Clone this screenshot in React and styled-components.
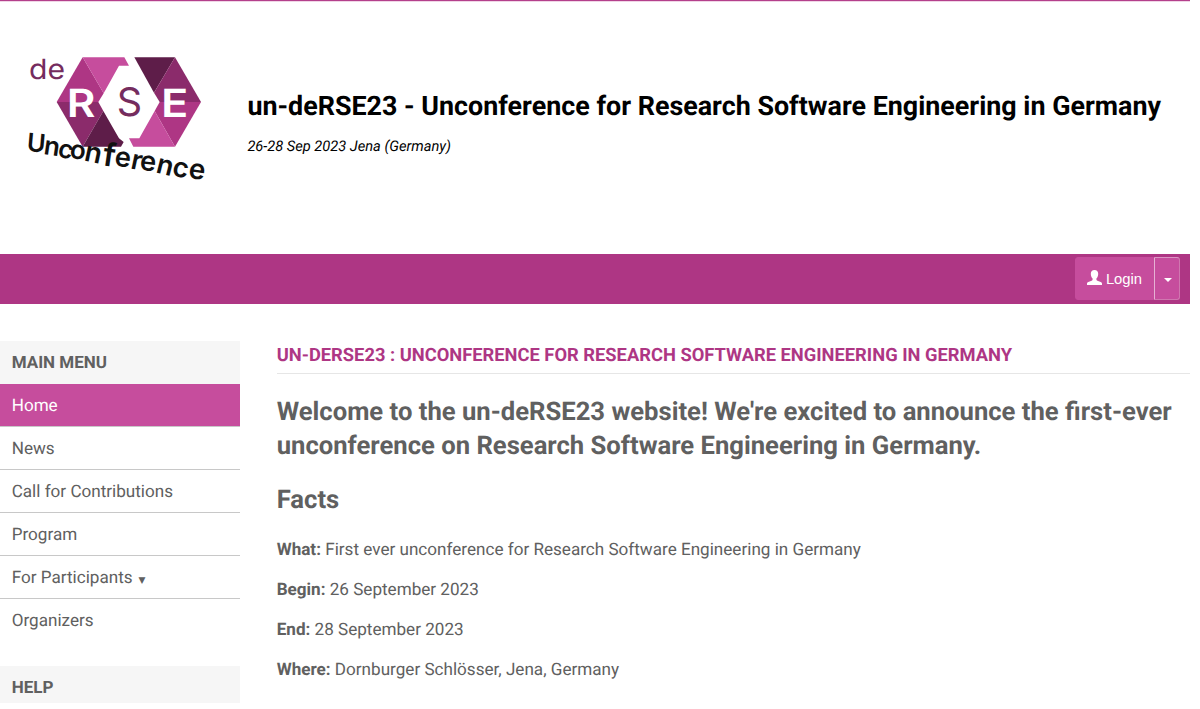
import React from "react";
import styled, { createGlobalStyle } from "styled-components";

const GlobalStyle = createGlobalStyle`
  body {
    margin: 0;
    background: #fff;
    overflow: hidden;
    text-rendering: geometricPrecision;
  }
`

const Page = styled.div`
  width: 1190px;
  height: 703px;
  overflow: hidden;
  box-sizing: border-box;
  border-top: 1px solid #b4408c;
  font-family: Roboto, "Liberation Sans", sans-serif;
  color: #606060;
`

const Header = styled.header`
  display: flex;
  align-items: flex-start;
  box-sizing: border-box;
  height: 253px;
  border-top: 1px solid #f0d5e6;
`

const Logo = styled.svg`
  flex: none;
  width: 210px;
  height: 150px;
  margin: 38px 22.4px 0 15px;
`

const Titles = styled.div`
  padding-top: 85px;
  color: #000;
`

const SiteTitle = styled.h1`
  margin: 0;
  font-size: 26.86px;
  line-height: 38px;
  font-weight: 700;
  white-space: nowrap;
`

const Dates = styled.div`
  margin-top: 11px;
  font-size: 14.65px;
  line-height: 20px;
  font-style: italic;
`

const NavBar = styled.nav`
  display: flex;
  justify-content: flex-end;
  align-items: flex-start;
  box-sizing: border-box;
  height: 50px;
  padding: 3px 10px 0 0;
  background: #ae3684;
`

const LoginButton = styled.button`
  display: flex;
  align-items: center;
  justify-content: center;
  box-sizing: border-box;
  width: ${({ $narrow }) => ($narrow ? "26px" : "79px")};
  height: 43px;
  padding: ${({ $narrow }) => ($narrow ? "1px 0 0 2px" : "1px 0 0")};
  border: 1px solid #c64d9d;
  border-color: ${({ $narrow }) => ($narrow ? "#dc94c4 #d077b0 #d077b0 #e6b1d4" : "#c64d9d")};
  border-radius: ${({ $narrow }) => ($narrow ? "0 3px 3px 0" : "3px 0 0 3px")};
  background: #c64d9d;
  color: #fff;
  font: 14.8px "Liberation Sans", Arial, sans-serif;
`

const UserIcon = styled.svg`
  width: 15px;
  height: 15px;
  margin: 0 4px 4px 0;
`

const Caret = styled.span`
  border: 4px solid transparent;
  border-top-color: #fff;
  border-bottom: 0;
  margin-top: 2px;
`

const Columns = styled.div`
  display: flex;
  padding-top: 37px;
`

const Sidebar = styled.aside`
  width: 240px;
  flex: none;
`

const MenuTitle = styled.h3`
  margin: 0;
  padding-left: 11.7px;
  height: 43px;
  line-height: 45px;
  font-size: 17px;
  font-weight: 700;
  text-transform: uppercase;
  background: #f6f6f6;
`

const Menu = styled.ul`
  list-style: none;
  margin: 0 0 24px;
  padding: 0;
`

const MenuItem = styled.li`
  box-sizing: border-box;
  height: 43px;
  padding-left: 11.7px;
  border-bottom: 1px solid ${({ $last }) => ($last ? "transparent" : "#c8c8c8")};
  line-height: 44px;
  font-size: 17.1px;
  color: ${({ $active }) => ($active ? "#fff" : "#606060")};
  background: ${({ $active }) => ($active ? "#c64d9d" : "transparent")};
`

const Arrow = styled.small`
  margin-left: 6px;
  font: 9px "DejaVu Sans", sans-serif;
`

const Main = styled.main`
  flex: 1;
  margin-left: 36.7px;
`

const PageTitle = styled.h2`
  margin: 0 0 21px;
  box-sizing: border-box;
  height: 33px;
  line-height: 29px;
  border-bottom: 1px solid #e6e6e6;
  font-size: 18.32px;
  font-weight: 700;
  color: #ae3684;
  text-transform: uppercase;
`

const Heading = styled.h2`
  margin: 0 0 20px;
  font-size: 25.63px;
  line-height: 34px;
  font-weight: 700;
`

const Fact = styled.p`
  margin: 0 0 14px;
  font-size: 17.1px;
  line-height: 26px;
`

const menu = ["Home", "News", "Call for Contributions", "Program", "For Participants", "Organizers"];

const facts = [
  ["What:", "First ever unconference for Research Software Engineering in Germany"],
  ["Begin:", "26 September 2023"],
  ["End:", "28 September 2023"],
  ["Where:", "Dornburger Schlösser, Jena, Germany"],
];

// lettering under the hexagons: character, x, baseline, size, angle
const scrawl = [
  ["U", 34, 333, 76, 5],
  ["n", 84, 342, 78, 8],
  ["c", 125, 348, 76, 14],
  ["o", 162, 353, 78, 8],
  ["n", 205, 361, 84, 12],
  ["f", 260, 376, 96, 8],
  ["e", 297, 377, 82, 6],
  ["r", 344, 385, 82, 12],
  ["e", 373, 389, 82, 6],
  ["n", 420, 397, 82, 14],
  ["c", 469, 406, 82, 12],
  ["e", 518, 413, 84, 8],
];

const DeRseLogo = () => (
  <Logo viewBox="0 0 630 450">
    <polygon points="125,186 203,52 266,160 250,186" fill="#ae3684" />
    <polygon points="203,52 328,52 342,77 312,77 266,160" fill="#c64d9d" />
    <polygon points="125,186 250,186 265,213 203,320" fill="#8b2b6b" />
    <polygon points="265,213 312,295 326,306 318,320 203,320" fill="#5e1d49" />
    <polygon points="358,52 480,52 417,158" fill="#5e1d49" />
    <polygon points="480,52 558,186 434,186 417,158" fill="#8b2b6b" />
    <polygon points="434,186 558,186 480,320 419,213" fill="#ae3684" />
    <polygon points="419,213 480,320 355,320 342,295 373,295" fill="#c64d9d" />
    <g fontFamily="Inter, sans-serif">
      <text x="42" y="116" fontSize="84" fontWeight="400" textLength="108" lengthAdjust="spacingAndGlyphs" fill="#752c5e">de</text>
      <text x="155" y="230" fontSize="117" fontWeight="600" textLength="86" lengthAdjust="spacingAndGlyphs" fill="#fff">R</text>
      <text x="305" y="229" fontSize="118" fontWeight="400" textLength="76" lengthAdjust="spacingAndGlyphs" fill="#752c5e">S</text>
      <text x="438" y="230" fontSize="117" fontWeight="600" textLength="82" lengthAdjust="spacingAndGlyphs" fill="#fff">E</text>
    </g>
    <g fontFamily="Inter, sans-serif" fontWeight="600" fill="#111">
      {scrawl.map(([char, x, y, size, angle]) => (
        <text key={x} fontSize={size} transform={`translate(${x} ${y}) rotate(${angle})`}>{char}</text>
      ))}
    </g>
  </Logo>
)

const App = () => (
  <>
    <GlobalStyle />
    <Page>
      <Header>
        <DeRseLogo />
        <Titles>
          <SiteTitle>un-deRSE23 - Unconference for Research Software Engineering in Germany</SiteTitle>
          <Dates>26-28 Sep 2023 Jena (Germany)</Dates>
        </Titles>
      </Header>
      <NavBar>
        <LoginButton>
          <UserIcon viewBox="0 0 15 15" fill="#fff">
            <path d="M7.5 0C5.2 0 3.8 1.5 3.8 3.7c0 1.9.7 3.8 1.8 4.8v1.1c0 .6-.4.9-1 1.1L1.3 12C.4 12.4 0 12.9 0 13.7V15h15v-1.3c0-.8-.4-1.3-1.3-1.7l-3.3-1.3c-.6-.2-1-.5-1-1.100V8.500c1.100-1 1.800-2.900 1.800-4.800C11.200 1.500 9.800 0 7.500 0z" />
          </UserIcon>
          Login
        </LoginButton>
        <LoginButton $narrow aria-label="Login options">
          <Caret />
        </LoginButton>
      </NavBar>
      <Columns>
        <Sidebar>
          <MenuTitle>Main menu</MenuTitle>
          <Menu>
            {menu.map((item, i) => (
              <MenuItem key={item} $active={i === 0} $last={i === menu.length - 1}>
                {item}
                {item === "For Participants" && <Arrow>▼</Arrow>}
              </MenuItem>
            ))}
          </Menu>
          <MenuTitle>Help</MenuTitle>
        </Sidebar>
        <Main>
          <PageTitle>un-deRSE23 : Unconference for Research Software Engineering in Germany</PageTitle>
          <Heading>Welcome to the un-deRSE23 website! We're excited to announce the first-ever unconference on Research Software Engineering in Germany.</Heading>
          <Heading>Facts</Heading>
          {facts.map(([label, text]) => (
            <Fact key={label}><strong>{label}</strong> {text}</Fact>
          ))}
        </Main>
      </Columns>
    </Page>
  </>
)

export default App
